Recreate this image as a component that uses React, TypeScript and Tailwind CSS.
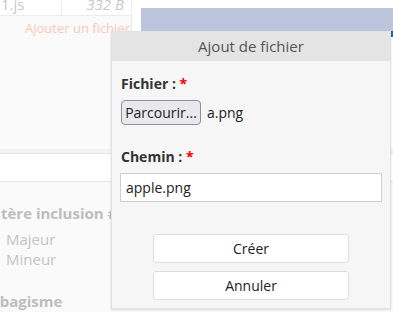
import React from "react";

const font = { fontFamily: '"Open Sans", "Noto Sans", sans-serif' };

function Required() {
  return <span className="text-[#ff0000]">*</span>;
}

export default function App() {
  return (
    <div
      className="relative h-[312px] w-[393px] overflow-hidden bg-[#fafafa] text-[#333]"
      style={font}
    >
      {/* faded page underneath the dialog */}
      <div className="flex">
        <div className="w-[132px] shrink-0 border-r border-[#ececec]">
          <div className="mt-[-8px] flex h-[24px] border-b border-[#ececec] bg-white text-[15px] leading-[24px] text-[#c9c9c9]">
            <span className="w-[62px] border-r border-[#ececec] pl-[1px]">1.js</span>
            <span className="flex-1 pr-[7px] text-right italic">332 B</span>
          </div>
          <div className="mt-[2px] pr-px text-right text-[13px] leading-[20px] text-[#fdc7b6]">
            Ajouter un fichier
          </div>
          <div className="h-[111px]" />
        </div>
        <div className="flex-1 bg-white">
          <div className="mt-[8px] h-[23px] ml-[9px] bg-[#bdc5dc]" />
        </div>
      </div>
      <div className="h-[4px] bg-[#f3f3f3]" />
      <div className="h-[29px] border-y border-[#e6e6e6] bg-white" />
      <div className="mt-[21px] ml-[-20px] text-[15px] font-bold leading-[20px] text-[#bdbdbd]">
        Critère inclusion #1
      </div>
      <div className="mt-[6px] flex flex-col pl-[6px] text-[15px] leading-[20px] text-[#c4c4c4]">
        <span>Majeur</span>
        <span>Mineur</span>
      </div>
      <div className="mt-[22px] ml-[-18px] text-[15px] font-bold leading-[20px] text-[#bdbdbd]">
        Tabagisme
      </div>

      {/* dialog */}
      <div className="absolute left-[111px] top-[31px] w-[280px] border border-[#e2e2e2] bg-[#f6f6f6] shadow-[0_1px_2px_rgba(0,0,0,0.12)]">
        <div className="flex h-[29px] items-center justify-center bg-[#e4e4e4] text-[15px] text-[#555]">
          Ajout de fichier
        </div>
        <div className="flex flex-col px-2 pb-[8px]">
          <label className="mt-[13px] pl-px text-[14px] font-bold leading-[20px] text-[#333]">
            Fichier : <Required />
          </label>
          <div className="mt-[6px] flex items-center gap-[6px] pl-px">
            <span className="flex h-[25px] w-[80px] items-center justify-center rounded-[4px] border border-[#8f8f9d] bg-[#e9e9ed] text-[14px] text-[#222]">
              Parcourir...
            </span>
            <span className="text-[14px] text-[#222]">a.png</span>
          </div>
          <label className="mt-[22px] pl-px text-[14px] font-bold leading-[20px] text-[#333]">
            Chemin : <Required />
          </label>
          <input
            readOnly
            value="apple.png"
            className="mt-[6px] h-[29px] w-full border border-[#cfcfcf] bg-white px-[5px] text-[14px] text-[#222] outline-none"
          />
          <div className="mt-[32px] flex flex-col items-center gap-[8px]">
            <button className="h-[29px] w-[196px] rounded-[3px] border border-[#dedede] bg-white text-[14px] text-[#222]">
              Créer
            </button>
            <button className="h-[29px] w-[196px] rounded-[3px] border border-[#dedede] bg-white text-[14px] text-[#222]">
              Annuler
            </button>
          </div>
        </div>
      </div>
      <div className="absolute left-[391px] top-[31px] h-[6px] w-[2px] bg-[#2f5fa5]" />
    </div>
  );
}
